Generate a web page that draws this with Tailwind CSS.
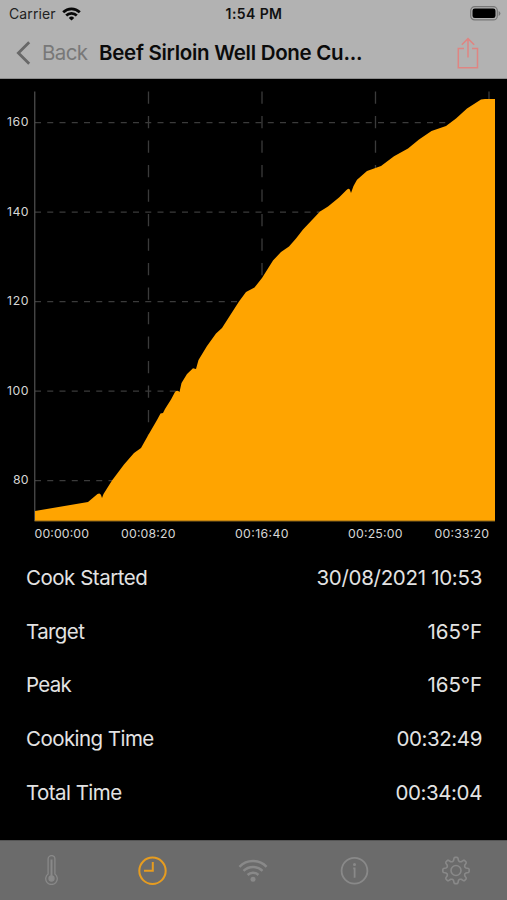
<!DOCTYPE html>
<html lang="en">
<head>
  <meta charset="utf-8"/>
  <meta name="viewport" content="width=device-width, initial-scale=1.0"/>
  <title>Cook Details</title>
  <script src="https://cdn.jsdelivr.net/npm/@tailwindcss/browser@4"></script>
</head>
<body class="bg-black font-['Inter','Liberation_Sans',sans-serif]">
<div class="w-[507px] h-[900px] flex flex-col overflow-hidden bg-black">

  <!-- Header -->
  <header class="h-[79px] shrink-0 bg-[#b2b2b2] border-b border-[#8c8c8c] text-black">
    <!-- Status bar -->
    <div class="h-[27px] grid grid-cols-3 items-center pl-[9px] pr-[6px] text-sm">
      <div class="flex items-center gap-[6px]">
        <span class="text-[#222] tracking-[0.1px]">Carrier</span>
        <svg class="w-[19px] h-[14px]" viewBox="0 0 19 14" fill="none" stroke="#080808" stroke-width="2.7">
          <path d="M1.2 5.2a11.8 11.8 0 0 1 16.6 0"/>
          <path d="M4.2 8.5a7.5 7.5 0 0 1 10.6 0"/>
          <path d="M6.8 10.9a3.9 3.9 0 0 1 5.4 0L9.5 13.6z" fill="#080808" stroke="none"/>
        </svg>
      </div>
      <div class="text-center font-semibold text-[#111] text-[14px] tracking-[0.4px] pr-[2px] pt-px">1:54 PM</div>
      <svg class="justify-self-end w-[31px] h-[15px]" viewBox="0 0 31 15">
        <rect x="0.7" y="0.7" width="26.6" height="13.2" rx="4" fill="none" stroke="#777" stroke-width="1.2"/>
        <rect x="2.5" y="2.5" width="23" height="9.6" rx="2.3" fill="#000"/>
        <path d="M28.6 5v5q1.8-.8 1.8-2.5T28.6 5z" fill="#777"/>
      </svg>
    </div>
    <!-- Navigation -->
    <div class="h-[51px] flex items-center pl-[16px] pr-[28px]">
      <svg class="w-[15px] h-[24px] shrink-0" viewBox="0 0 15 24" fill="none" stroke="#686868" stroke-width="2.8">
        <path d="M13.2 1.3 2.4 12l10.8 10.7"/>
      </svg>
      <span class="ml-[11px] w-[57px] pt-px text-[20.5px] tracking-[-0.6px] text-[#787878]">Back</span>
      <h1 class="pt-px text-[20.5px] font-semibold tracking-[-0.29px] whitespace-nowrap text-[#0b0b0b]">Beef Sirloin Well Done Cu...</h1>
      <svg class="ml-auto w-[22px] h-[32px] shrink-0" viewBox="0 0 22 32" fill="none" stroke="#df8582" stroke-width="1.5">
        <path d="M7 11.4H1.3v19.3h19.2V11.4H15"/>
        <path d="M11 20.5V2M4.8 7.8 11 1.6l6.2 6.2"/>
      </svg>
    </div>
  </header>

  <!-- Temperature chart -->
  <svg class="w-[507px] h-[470px] shrink-0" viewBox="0 79 507 470">
    <g stroke="#3b3b3b" stroke-width="1.3" stroke-dasharray="6 6.25">
      <path d="M35 122.7H495M35 212.1H495M35 301.6H495M35 391.2H495M35 480.7H495"/>
    </g>
    <g stroke="#3b3b3b" stroke-width="1.3" stroke-dasharray="12.25 12.25">
      <path d="M148.5 91.5V521M262 91.5V521M375.5 91.5V521M489 91.5V521"/>
    </g>
    <path d="M34.8 91.5V521" stroke="#626262" stroke-width="1"/>
    <path fill="#ffa400" d="M35 521V511L88 502L97.5 494Q100 492.5 101 495L102 498L103.5 494L112 480.5L124 464.5L134 453L141 448L148 435.5L157 420L160.5 413.5L163 413L165 409L171 399.5L175 392Q177 389.5 179.5 392L181.5 383L187 374L193 368.2L196 369L198.5 360L207 346L216 333.5L222 328L230 315.5L239 301.5L246 292L254.5 287.5L262 278L273 260.5L281 252L289 246.5L296 238.5L303 229.5L312 220L320 211.5L328 206.5L339 197.5L346 190.5Q348.5 187.5 349.8 189.5L351 193L353.5 186L357 179.8L367 171L381 166L394 156.3L408 148.5L419 139.5L431.5 131L446 126L456 118.5L467 108.5L481 99.5L485 99H495V521Z"/>
    <path d="M34.5 521H495" stroke="#8a671f" stroke-width="1"/>
    <g fill="#d6d6d6" font-size="12.3">
      <text x="7" y="126.3" textLength="21.5">160</text>
      <text x="7" y="215.8" textLength="21.5">140</text>
      <text x="7" y="305.3" textLength="21.5">120</text>
      <text x="7" y="394.8" textLength="21.5">100</text>
      <text x="13" y="484.3" textLength="15.5">80</text>
      <text x="34.5" y="538" textLength="54.5">00:00:00</text>
      <text x="121" y="538" textLength="54.5">00:08:20</text>
      <text x="235" y="538" textLength="53.5">00:16:40</text>
      <text x="348" y="538" textLength="54.5">00:25:00</text>
      <text x="434.5" y="538" textLength="54.5">00:33:20</text>
    </g>
  </svg>

  <!-- Cook summary -->
  <dl class="flex-1 pt-[2.3px] pl-[26px] pr-[25px] text-[20.5px] text-[#e3e3e3]">
    <div class="h-[53.8px] flex items-center justify-between">
      <dt class="tracking-[-0.48px]">Cook Started</dt>
      <dd class="tracking-[-0.3px]">30/08/2021 10:53</dd>
    </div>
    <div class="h-[53.8px] flex items-center justify-between">
      <dt class="tracking-[-0.6px]">Target</dt>
      <dd class="tracking-[-0.1px]">165°F</dd>
    </div>
    <div class="h-[53.8px] flex items-center justify-between">
      <dt class="tracking-[-0.7px]">Peak</dt>
      <dd class="tracking-[-0.1px]">165°F</dd>
    </div>
    <div class="h-[53.8px] flex items-center justify-between">
      <dt class="tracking-[-0.55px]">Cooking Time</dt>
      <dd class="tracking-[-0.4px]">00:32:49</dd>
    </div>
    <div class="h-[53.8px] flex items-center justify-between">
      <dt class="tracking-[-0.55px]">Total Time</dt>
      <dd class="tracking-[-0.4px]">00:34:04</dd>
    </div>
  </dl>

  <!-- Tab bar -->
  <nav class="h-[60px] shrink-0 grid grid-cols-5 items-center justify-items-center bg-[#6b6b6b] border-t border-[#555] pb-px text-[#898989]">
    <svg class="w-[30px] h-[30px]" viewBox="0 0 30 30" fill="none" stroke="currentColor" stroke-width="1.3">
      <path d="M12.1 19V4a3.4 3.4 0 0 1 6.8 0v15a5.8 5.8 0 1 1-6.8 0z"/>
      <path d="M15.5 4.5V22" stroke-width="2"/>
      <circle cx="15.5" cy="23.5" r="2.5" fill="currentColor"/>
    </svg>
    <svg class="w-[30px] h-[30px] text-[#e69c20]" viewBox="0 0 30 30" fill="none" stroke="currentColor" stroke-width="2">
      <circle cx="15.5" cy="15.8" r="13.2"/>
      <path d="M15.8 7v8.7H7"/>
    </svg>
    <svg class="w-[30px] h-[30px]" viewBox="0 0 30 30" fill="none" stroke="currentColor" stroke-width="2.5">
      <path d="M1.4 11.8a19 19 0 0 1 27.2 0"/>
      <path d="M5.5 15.9a13.4 13.4 0 0 1 19 0"/>
      <path d="M9.6 20a7.6 7.6 0 0 1 10.8 0"/>
      <circle cx="15" cy="24.2" r="2.5" fill="currentColor" stroke="none"/>
    </svg>
    <svg class="w-[30px] h-[30px]" viewBox="0 0 30 30" fill="none" stroke="currentColor" stroke-width="1.8">
      <circle cx="14.5" cy="15.8" r="12.9"/>
      <path d="M13.2 13.3h1.4v9.5"/>
      <circle cx="14.5" cy="9.5" r="1.5" fill="currentColor" stroke="none"/>
    </svg>
    <svg class="w-[30px] h-[30px]" viewBox="0 0 30 30" fill="none" stroke="currentColor" stroke-width="1.6" stroke-linejoin="round">
      <path id="gear"/>
      <circle cx="15" cy="15.5" r="5"/>
    </svg>
  </nav>
</div>

<script>
  // Build the eight-tooth outline of the settings icon
  const points = [];
  for (let i = 0; i < 8; i++) {
    [[-14, 10.2], [-9, 12.6], [-5, 13.2], [5, 13.2], [9, 12.6], [14, 10.2], [22.5, 9.4]].forEach(([offset, radius]) => {
      const angle = (i * 45 + offset) * Math.PI / 180;
      points.push((15 + radius * Math.sin(angle)).toFixed(2) + ' ' + (15.5 - radius * Math.cos(angle)).toFixed(2));
    });
  }
  document.getElementById('gear').setAttribute('d', 'M' + points.join('L') + 'Z');
</script>
</body>
</html>
